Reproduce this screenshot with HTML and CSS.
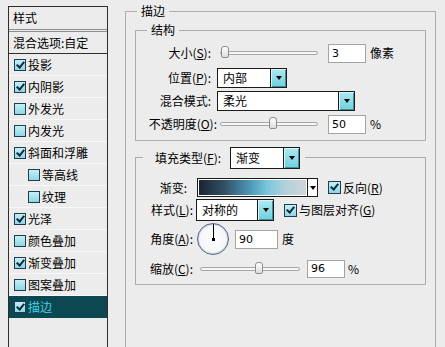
FILE: index.html
```html
<!DOCTYPE html>
<html lang="zh-CN">
<head>
  <meta charset="UTF-8">
  <title>图层样式 - 描边</title>
  <link rel="stylesheet" href="styles.css">
</head>
<body>
  <div class="dialog">

    <!-- styles list -->
    <div class="styles-panel">
      <div class="panel-head">样式</div>
      <div class="panel-blend">混合选项:自定</div>
      <ul class="style-list">
        <li><span class="check on"></span>投影</li>
        <li><span class="check on"></span>内阴影</li>
        <li><span class="check"></span>外发光</li>
        <li><span class="check"></span>内发光</li>
        <li><span class="check on"></span>斜面和浮雕</li>
        <li class="sub"><span class="check"></span>等高线</li>
        <li class="sub"><span class="check"></span>纹理</li>
        <li><span class="check on"></span>光泽</li>
        <li><span class="check"></span>颜色叠加</li>
        <li><span class="check on"></span>渐变叠加</li>
        <li><span class="check"></span>图案叠加</li>
        <li class="active"><span class="check on"></span>描边</li>
      </ul>
    </div>

    <!-- stroke settings -->
    <div class="settings">
      <div class="group group-outer">
        <div class="group-title">描边</div>

        <div class="group group-structure">
          <div class="group-title">结构</div>

          <div class="row row-size">
            <span class="label">大小(<u>S</u>):</span>
            <div class="slider"><span class="thumb" style="left: 0px"></span></div>
            <span class="field">3</span>
            <span class="unit">像素</span>
          </div>

          <div class="row row-pos">
            <span class="label">位置(<u>P</u>):</span>
            <div class="select select-pos">
              <span class="select-value">内部</span>
              <span class="select-btn"></span>
            </div>
          </div>

          <div class="row row-blend">
            <span class="label">混合模式:</span>
            <div class="select select-blend">
              <span class="select-value">柔光</span>
              <span class="select-btn"></span>
            </div>
          </div>

          <div class="row row-opacity">
            <span class="label label-wide">不透明度(<u>O</u>):</span>
            <div class="slider"><span class="thumb" style="left: 48px"></span></div>
            <span class="field">50</span>
            <span class="unit">%</span>
          </div>
        </div>

        <div class="group group-fill">
          <div class="fill-title">
            <span class="fill-label">填充类型(<u>F</u>):</span>
            <div class="select select-fill">
              <span class="select-value">渐变</span>
              <span class="select-btn"></span>
            </div>
          </div>

          <div class="row row-gradient">
            <span class="label label-grad">渐变:</span>
            <div class="gradient">
              <span class="gradient-bar"></span>
              <span class="gradient-btn"></span>
            </div>
            <span class="check on"></span>
            <span class="check-text">反向(<u>R</u>)</span>
          </div>

          <div class="row row-style">
            <span class="label">样式(<u>L</u>):</span>
            <div class="select select-style">
              <span class="select-value">对称的</span>
              <span class="select-btn"></span>
            </div>
            <span class="check on"></span>
            <span class="check-text">与图层对齐(<u>G</u>)</span>
          </div>

          <div class="row row-angle">
            <span class="label">角度(<u>A</u>):</span>
            <div class="dial"></div>
            <span class="field field-angle">90</span>
            <span class="unit">度</span>
          </div>

          <div class="row row-scale">
            <span class="label">缩放(<u>C</u>):</span>
            <div class="slider slider-scale"><span class="thumb" style="left: 54px"></span></div>
            <span class="field">96</span>
            <span class="unit">%</span>
          </div>
        </div>
      </div>
    </div>

  </div>
</body>
</html>
```

FILE: styles.css
```css
body {
  margin: 0;
  height: 347px;
  overflow: hidden;
  background: #ececec;
  color: #000;
  font-family: "Noto Sans CJK SC", "Liberation Sans", sans-serif;
  font-size: 12px;
  line-height: 14px;
}

u {
  text-decoration: underline;
  text-underline-offset: 1px;
}

.dialog {
  display: flex;
  align-items: flex-start;
}

/* ---------- left list ---------- */

.styles-panel {
  margin: 6px 0 0 8px;
  width: 100px;
  height: 341px;
  box-sizing: border-box;
  border: 1px solid #2e2e2e;
  border-bottom: none;
}

.panel-head {
  height: 22px;
  line-height: 22px;
  padding-left: 4px;
  border-bottom: 3px double #8c8c8c;
}

.panel-blend {
  height: 21px;
  line-height: 21px;
  padding-left: 4px;
  border-bottom: 1px solid #2e2e2e;
}

.style-list {
  list-style: none;
  margin: 0;
  padding: 0;
}

.style-list li {
  display: flex;
  align-items: center;
  height: 22px;
  box-sizing: border-box;
  padding-left: 5px;
  border-bottom: 1px solid #f8f8f8;
}

.style-list li .check {
  margin-right: 2px;
}

.style-list li.sub {
  padding-left: 19px;
}

.style-list li.active {
  background: #0c4852;
  color: #48cfe0;
  border-bottom-color: #0c4852;
}

.check {
  position: relative;
  flex: none;
  width: 12px;
  height: 12px;
  box-sizing: border-box;
  border: 1px solid #1f3b52;
  background: linear-gradient(#c4f0f5, #8dd7e3);
}

.check.on::after {
  content: "";
  position: absolute;
  left: 3px;
  top: 0px;
  width: 3px;
  height: 6px;
  border: solid #14283a;
  border-width: 0 2px 2px 0;
  transform: rotate(40deg);
}

/* ---------- right side ---------- */

.settings {
  margin-left: 17px;
  width: 311px;
}

.group {
  border: 1px solid #acacac;
}

.group-outer {
  margin-top: 11px;
  height: 336px;
  box-sizing: border-box;
  border-bottom: none;
}

.group-title {
  width: fit-content;
  margin: -8px 0 0 11px;
  padding: 0 4px;
  background: #ececec;
  line-height: 14px;
}

.group-structure {
  margin: 12px 9px 0;
  padding-bottom: 5px;
}

.group-fill {
  margin: 16px 9px 0;
  padding-bottom: 6px;
}

.row {
  display: flex;
  align-items: center;
  height: 22px;
}

.label {
  width: 75px;
  flex: none;
  text-align: right;
  white-space: nowrap;
}

.label-wide {
  width: 81px;
}

.row-size {
  margin-top: 5px;
}

.row-size .slider {
  margin-left: 9px;
}

.row-pos {
  margin-top: 3px;
}

.row-blend {
  margin-top: 1px;
}

.row-opacity {
  margin-top: 1px;
}

.row-opacity .slider {
  margin-left: 3px;
}

.slider {
  position: relative;
  width: 98px;
  height: 4px;
  border: 1px solid #a6a6a6;
  border-radius: 3px;
  background: #f6f6f6;
  box-sizing: border-box;
}

.thumb {
  position: absolute;
  top: -6px;
  width: 8px;
  height: 12px;
  box-sizing: border-box;
  border: 1px solid #8c8c8c;
  border-radius: 3px 3px 2px 2px;
  background: linear-gradient(#ffffff, #dcdcdc);
}

.field {
  flex: none;
  width: 38px;
  height: 19px;
  box-sizing: border-box;
  margin-left: 10px;
  padding-left: 3px;
  border: 1px solid #a4a4a4;
  background: #fff;
  line-height: 17px;
  font-family: "DejaVu Sans", "Liberation Sans", sans-serif;
  font-size: 11px;
}

.unit {
  margin-left: 4px;
}

.select {
  display: flex;
  flex: none;
  height: 20px;
  box-sizing: border-box;
  border: 1px solid #1a1a1a;
  background: #fff;
}

.select-value {
  flex: 1;
  padding-left: 5px;
  line-height: 18px;
}

.select-btn {
  display: flex;
  align-items: center;
  justify-content: center;
  width: 15px;
  border-left: 1px solid #1a1a1a;
  background: linear-gradient(#aeeaf1, #70cfdc);
  box-shadow: inset 1px 1px #d6f6fa, inset -1px -1px #3d8f9c;
}

.select-btn::after {
  content: "";
  border-left: 3px solid transparent;
  border-right: 3px solid transparent;
  border-top: 4px solid #000;
}

.select-pos {
  margin-left: 6px;
  width: 70px;
}

.select-blend {
  margin-left: 6px;
  width: 138px;
}

/* fill group */

.fill-title {
  display: flex;
  align-items: center;
  width: fit-content;
  height: 22px;
  margin: -11px 0 0 7px;
  padding: 0 5px 0 12px;
  background: #ececec;
}

.fill-label {
  width: 75px;
  white-space: nowrap;
}

.select-fill {
  width: 70px;
  height: 22px;
}

.select-fill .select-value {
  line-height: 20px;
}

.group-fill .label {
  width: 57px;
}

.group-fill .label.label-grad {
  padding-right: 6px;
  box-sizing: border-box;
}

.row-gradient {
  margin-top: 9px;
  height: 19px;
}

.gradient {
  display: flex;
  margin-left: 4px;
  width: 121px;
  height: 19px;
  box-sizing: border-box;
  border: 1px solid #1a1a1a;
}

.gradient-bar {
  flex: 1;
  border: 1px solid #fff;
  background: linear-gradient(to right, #1b2430 0%, #2f4c62 22%, #4d98ba 48%, #7cc6de 64%, #b4d2dc 82%, #cfd5d8 100%);
}

.gradient-btn {
  display: flex;
  align-items: center;
  justify-content: center;
  width: 9px;
  border-left: 1px solid #1a1a1a;
  background: #fff;
}

.gradient-btn::after {
  content: "";
  border-left: 3px solid transparent;
  border-right: 3px solid transparent;
  border-top: 4px solid #000;
}

.row-gradient .check,
.row-style .check {
  width: 13px;
  height: 13px;
  margin-left: 10px;
}

.check-text {
  margin-left: 2px;
  white-space: nowrap;
}

.row-style {
  margin-top: 2px;
}

.select-style {
  margin-left: 3px;
  width: 78px;
  height: 22px;
}

.select-style .select-value {
  line-height: 20px;
}

.row-angle {
  margin-top: 2px;
  height: 32px;
}

.dial {
  position: relative;
  flex: none;
  margin-left: 4px;
  width: 32px;
  height: 32px;
  box-sizing: border-box;
  border: 1px solid #56668a;
  border-radius: 50%;
  background: radial-gradient(#ffffff, #eef0f4);
  box-shadow: inset 0 0 0 1px #c4ccdc;
}

.dial::before {
  content: "";
  position: absolute;
  left: 15px;
  top: 0;
  width: 1px;
  height: 15px;
  background: #000;
}

.dial::after {
  content: "";
  position: absolute;
  left: 14px;
  top: 14px;
  width: 3px;
  height: 3px;
  background: #000;
}

.field-angle {
  margin-left: 6px;
  width: 43px;
}

.row-scale {
  margin-top: 5px;
  height: 18px;
}

.slider-scale {
  margin-left: 7px;
  width: 100px;
}

.row-scale .field {
  margin-left: 7px;
  height: 18px;
  line-height: 16px;
}

.row-scale .unit {
  margin-left: 3px;
}
```
